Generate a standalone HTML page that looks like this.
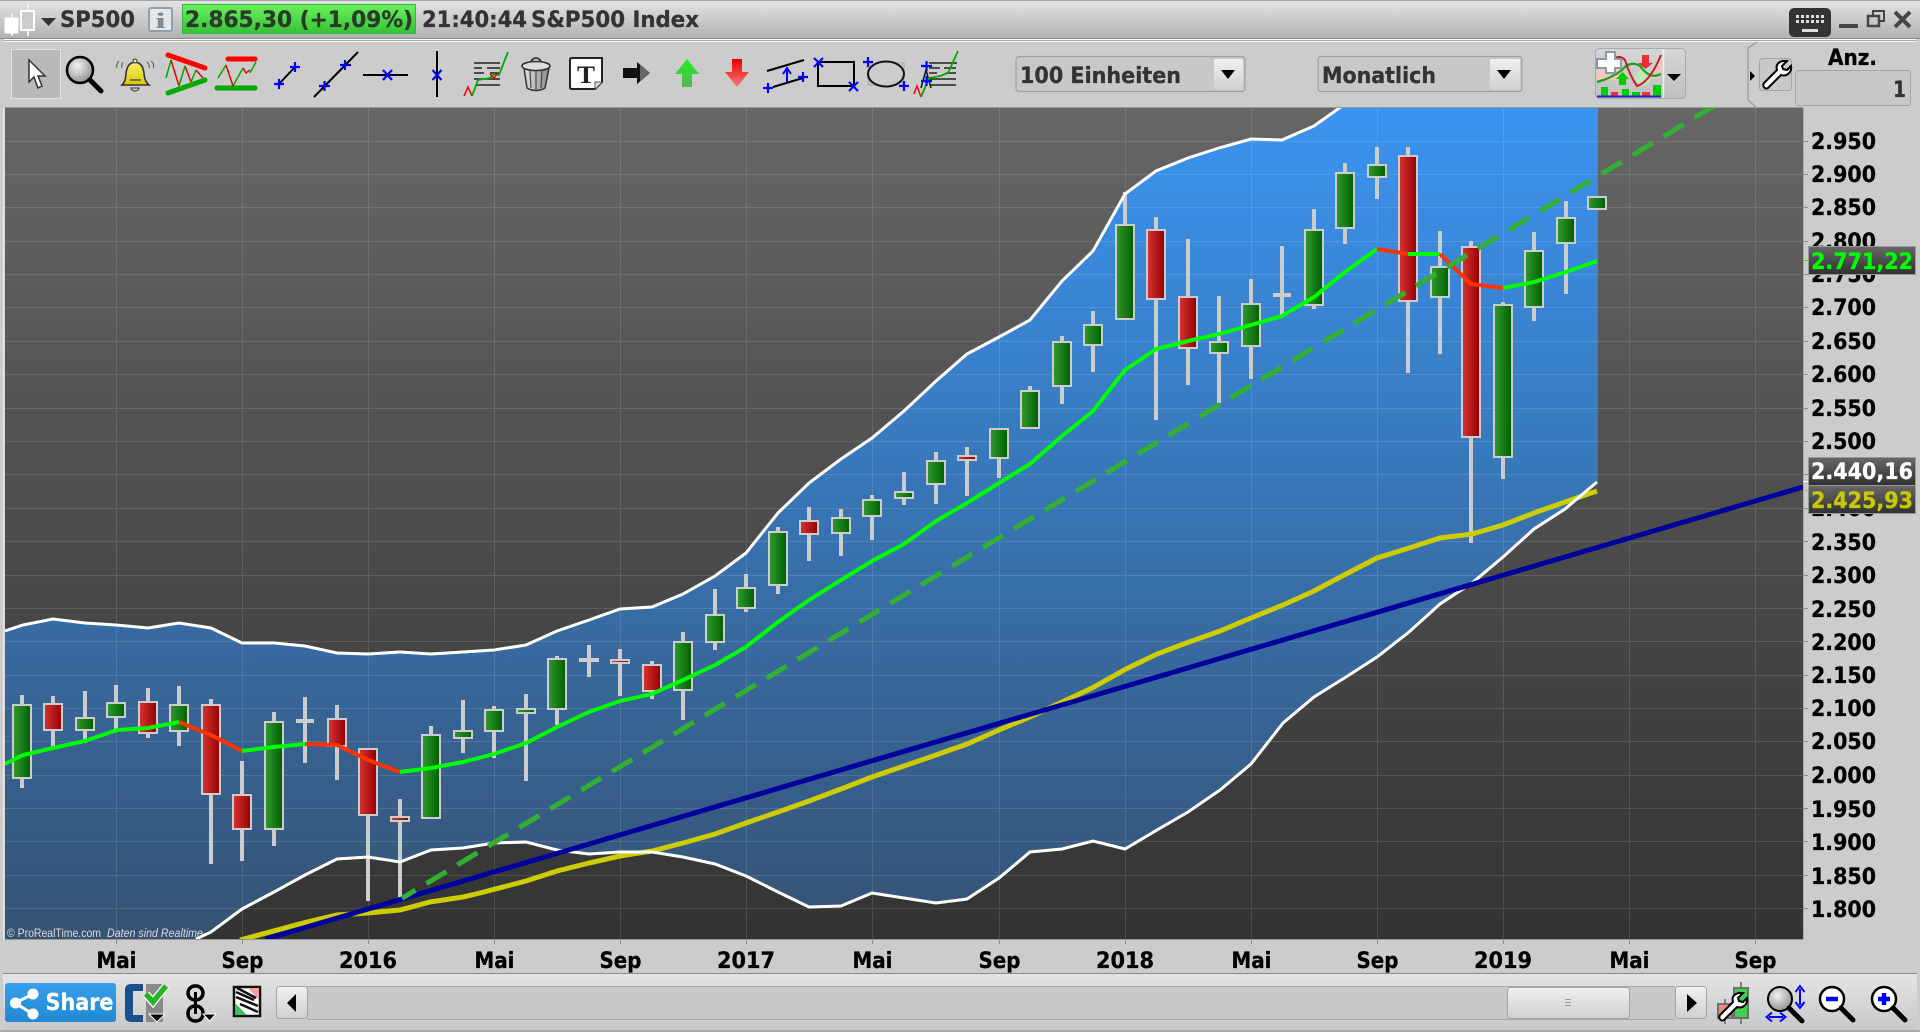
<!DOCTYPE html>
<html><head><meta charset="utf-8"><title>SP500</title>
<style>
html,body{margin:0;padding:0;background:#ccc;overflow:hidden}
svg{display:block}
text{font-family:"DejaVu Sans","Liberation Sans",sans-serif;font-weight:bold;font-size:22px}
.a{fill:#000;stroke:#000;stroke-width:.3px;font-size:22.5px}
.x{fill:#000;stroke:#000;stroke-width:.3px}
.t{fill:#333;stroke:#333;stroke-width:.3px}
.b{fill:none;stroke:#000;stroke-width:2}
.p{fill:none;stroke:#00f;stroke-width:2.2}
.g{stroke:#ccc;stroke-width:2;fill:url(#cg)}
.r{stroke:#ccc;stroke-width:2;fill:url(#cr)}
.ma{fill:none;stroke:#0f0;stroke-width:4}
.mr{fill:none;stroke:#f30;stroke-width:4}
</style></head><body>
<svg width="1920" height="1032" viewBox="0 0 1920 1032" xmlns="http://www.w3.org/2000/svg">
<defs>
<linearGradient id="tb" x1="0" y1="0" x2="0" y2="1"><stop offset="0" stop-color="#e4e4e4"/><stop offset="1" stop-color="#b2b2b2"/></linearGradient>
<linearGradient id="pr" x1="0" y1="0" x2="0" y2="1"><stop offset="0" stop-color="#68f25a"/><stop offset="1" stop-color="#36c236"/></linearGradient>
<linearGradient id="bg" gradientUnits="userSpaceOnUse" x1="0" y1="108" x2="0" y2="939"><stop offset="0" stop-color="#666"/><stop offset="1" stop-color="#333"/></linearGradient>
<linearGradient id="bd" gradientUnits="userSpaceOnUse" x1="0" y1="108" x2="0" y2="939"><stop offset="0" stop-color="#3a94f0"/><stop offset="1" stop-color="#365273"/></linearGradient>
<linearGradient id="cg"><stop offset="0" stop-color="#319a31"/><stop offset="1" stop-color="#005f00"/></linearGradient>
<linearGradient id="cr"><stop offset="0" stop-color="#d83434"/><stop offset="1" stop-color="#940000"/></linearGradient>
<linearGradient id="box" x1="0" y1="0" x2="0" y2="1"><stop offset="0" stop-color="#686868"/><stop offset="1" stop-color="#303030"/></linearGradient>
<linearGradient id="btn" x1="0" y1="0" x2="0" y2="1"><stop offset="0" stop-color="#f0f0f0"/><stop offset="1" stop-color="#d0d0d0"/></linearGradient>
<linearGradient id="btn2" x1="0" y1="0" x2="0" y2="1"><stop offset="0" stop-color="#d6d6d6"/><stop offset="1" stop-color="#c0c0c0"/></linearGradient>
<linearGradient id="bar" x1="0" y1="0" x2="0" y2="1"><stop offset="0" stop-color="#e4e4e4"/><stop offset="1" stop-color="#c8c8c8"/></linearGradient>
<linearGradient id="sh" x1="0" y1="0" x2="0" y2="1"><stop offset="0" stop-color="#36a0ea"/><stop offset="1" stop-color="#2288d2"/></linearGradient>
<linearGradient id="up" x1="0" y1="0" x2="0" y2="1"><stop offset="0" stop-color="#1cf01c"/><stop offset="1" stop-color="#5ab45a"/></linearGradient>
<linearGradient id="dn" x1="0" y1="0" x2="0" y2="1"><stop offset="0" stop-color="#e60000"/><stop offset="1" stop-color="#ff7a7a"/></linearGradient>
<linearGradient id="bell" x1="0" y1="0" x2="0" y2="1"><stop offset="0" stop-color="#f8f070"/><stop offset="1" stop-color="#d8c800"/></linearGradient>
<linearGradient id="can" x1="0" y1="0" x2="1" y2="0"><stop offset="0" stop-color="#e0e0e0"/><stop offset="1" stop-color="#8a8a8a"/></linearGradient>
<radialGradient id="lens" cx=".4" cy=".35" r=".7"><stop offset="0" stop-color="#f4f4f4"/><stop offset="1" stop-color="#8a8a8a"/></radialGradient>
<clipPath id="plot"><rect x="5" y="108" width="1798" height="831"/></clipPath>
</defs>

<rect width="1920" height="1032" fill="#ccc"/>
<!-- title bar -->
<rect x="0" y="0" width="1920" height="38" fill="url(#tb)"/>
<rect x="0" y="0" width="1920" height="1" fill="#a4a4a4"/>
<rect x="0" y="38" width="1920" height="1" fill="#8c8c8c"/>
<rect x="4" y="39" width="1912" height="1" fill="#fff"/>
<rect x="4" y="40" width="1912" height="1" fill="#aaa"/>
<rect x="4" y="41" width="1912" height="1" fill="#f4f4f4"/>
<path d="M12 14V36M28 3V36" stroke="#eee" stroke-width="2"/>
<rect x="5" y="18" width="13" height="15" fill="#fff" stroke="#fff"/>
<rect x="21" y="11" width="13" height="19" fill="#ccc" stroke="#fff" stroke-width="2"/>
<path d="M41 18H56L48.500 26Z" fill="#333"/>
<text x="60" y="27" textLength="75" lengthAdjust="spacingAndGlyphs" class="t">SP500</text>
<rect x="149" y="8" width="23" height="23" rx="2" fill="#e6e6e6" stroke="#8ea0ae" stroke-width="2"/>
<text x="155" y="28" textLength="11" lengthAdjust="spacingAndGlyphs" style="fill:#808a90;font-family:'Liberation Serif',serif;font-size:22px">i</text>
<rect x="182.500" y="4.500" width="233" height="29" fill="url(#pr)" stroke="#3fb13f"/>
<text x="185" y="27" textLength="228" lengthAdjust="spacingAndGlyphs" style="fill:#2c3a2c;stroke:#2c3a2c;stroke-width:.3px">2.865,30 (+1,09%)</text>
<text x="422" y="27" textLength="105" lengthAdjust="spacingAndGlyphs" class="t">21:40:44</text>
<text x="531" y="27" textLength="168" lengthAdjust="spacingAndGlyphs" class="t">S&amp;P500 Index</text>
<!-- window controls -->
<rect x="1789" y="8" width="42" height="29" rx="5" fill="#333"/>
<path d="M1796 15h3v3h-3zM1801 15h3v3h-3zM1806 15h3v3h-3zM1811 15h3v3h-3zM1816 15h3v3h-3zM1821 15h3v3h-3zM1796 20h3v3h-3zM1801 20h3v3h-3zM1806 20h3v3h-3zM1811 20h3v3h-3zM1816 20h3v3h-3zM1821 20h3v3h-3zM1802 29h16v3h-16z" fill="#ddd"/>
<rect x="1839" y="24" width="19" height="4" rx="1" fill="#444"/>
<path d="M1873 16V11H1884V21H1878" fill="none" stroke="#444" stroke-width="2"/>
<rect x="1868" y="16" width="11" height="10" fill="none" stroke="#444" stroke-width="2.500"/>
<path d="M1895 12L1910 27M1910 12L1895 27" stroke="#444" stroke-width="4"/>

<!-- toolbar -->
<rect x="11.500" y="49.500" width="49" height="49" fill="#b9b9b9" stroke="#e2e2e2"/>
<path d="M29 60V82L34 77L38 88L42 86L38 76H45Z" fill="#fff" stroke="#333" stroke-width="1.500"/>
<circle cx="80" cy="70" r="13" fill="url(#lens)" stroke="#000" stroke-width="2.500"/>
<path d="M90 80L101 91" stroke="#000" stroke-width="5" stroke-linecap="round"/>
<path d="M122 85C127 80 125 74 127 69C129 60 141 60 143 69C145 74 143 80 149 85Z" fill="url(#bell)" stroke="#333" stroke-width="1.600"/>
<circle cx="135" cy="61" r="2" fill="#ddd" stroke="#333"/>
<path d="M131 88a4 3 0 0 0 8 0Z" fill="#ccc" stroke="#333"/>
<path d="M130 80H141" stroke="#555" stroke-width="1.500"/>
<path d="M119 61Q116 64 117 68M123 62Q121 65 122 68M151 61Q155 64 153 68M147 62Q150 65 149 68" fill="none" stroke="#555"/>
<path d="M168 55L205 68" stroke="#f00" stroke-width="5" stroke-linecap="round"/>
<path d="M168 93L205 80" stroke="#0a0" stroke-width="5" stroke-linecap="round"/>
<path d="M166 78L171 60" stroke="#0a0" stroke-width="1.500" fill="none"/>
<path d="M171 60L179 86M185 66L191 82M196 70L203 78" stroke="#e00" stroke-width="1.500" fill="none"/>
<path d="M179 86L185 66M191 82L196 70" stroke="#0a0" stroke-width="1.500" fill="none"/>
<path d="M228 59H255" stroke="#f00" stroke-width="5" stroke-linecap="round"/>
<path d="M217 88H255" stroke="#0a0" stroke-width="5" stroke-linecap="round"/>
<path d="M218 78L226 65M233 86L243 68M250 73L256 62" stroke="#0a0" stroke-width="1.500" fill="none"/>
<path d="M226 65L233 86M243 68L246 73L250 70" stroke="#e00" stroke-width="1.500" fill="none"/>
<path d="M279 84L295 67" class="b"/><path d="M274 84H284M279 79V89M290 67H300M295 62V72" class="p"/>
<path d="M314 97L358 52" class="b"/><path d="M319 86H330M324.500 81V91M340 65H351M345 60V70" class="p"/>
<path d="M363 75H408" class="b" stroke-width="2.500"/><path d="M383 70L392 80M392 70L383 80" class="p"/>
<path d="M437 51V97" class="b"/><path d="M432.500 70L441.500 80M441.500 70L432.500 80" class="p"/>
<path d="M474 63H500M474 68H482M487 68H500M474 73H484M490 73H500M474 79H500M476 85H500" stroke="#222" stroke-width="1.500" fill="none"/>
<path d="M464 96L468 87L472 96" fill="none" stroke="#e00" stroke-width="1.500"/>
<path d="M472 96L478 80L490 78L494 74L499 75L508 52" fill="none" stroke="#0a0" stroke-width="1.800"/>
<path d="M490 74L494 78L497 74" fill="none" stroke="#e00" stroke-width="1.500"/>
<path d="M524 68L527 88Q536 93 545 88L549 68" fill="url(#can)" stroke="#333" stroke-width="1.500"/>
<path d="M530 71L531 88M536 71V90M542 71L541 88" stroke="#444" stroke-width="1.200"/>
<ellipse cx="536" cy="66" rx="14" ry="4.500" fill="#ddd" stroke="#333" stroke-width="1.600"/>
<path d="M531 61Q536 55 541 61" fill="none" stroke="#333" stroke-width="1.800"/>
<path d="M572 58H602V82L595 89H572Q570 89 570 87V60Q570 58 572 58Z" fill="#fff" stroke="#222" stroke-width="2"/>
<path d="M595 89V82H602" fill="#ddd" stroke="#555"/>
<text x="577" y="83" textLength="18" lengthAdjust="spacingAndGlyphs" style="fill:#222;font-family:'Liberation Serif',serif;font-size:25px">T</text>
<path d="M623 68H637V62L650 73L637 84V78H623Z" fill="#111"/><path d="M640 65L650 73L640 81Z" fill="#666"/>
<path d="M687 59L699 74H692V87H682V74H675Z" fill="url(#up)"/>
<path d="M732 59H742V72H749L737 87L725 72H732Z" fill="url(#dn)"/>
<path d="M767 71L804 60M773 87L803 78" class="b"/>
<path d="M763 88H773M768 83V93M798 77H808M803 72V82" class="p"/>
<path d="M787 82V70M783 74L787 68L791 74" fill="none" stroke="#00f" stroke-width="2"/>
<rect x="818" y="62" width="36" height="24" class="b" stroke-width="2"/>
<path d="M814 58L823 67M823 58L814 67M849 82L858 91M858 82L849 91" class="p"/>
<rect x="867" y="62" width="38" height="24" fill="#b9b9b9"/>
<ellipse cx="886" cy="74" rx="18" ry="12.500" fill="#ccc" stroke="#111" stroke-width="2"/>
<path d="M863 62H873M868 57V67M899 86H909M904 81V91" class="p"/>
<path d="M929 63H957M929 68H940M944 68H956M929 73H937M946 73H956M929 79H956M931 85H956" stroke="#222" stroke-width="1.500" fill="none"/>
<path d="M921 88L926 70L931 88" fill="none" stroke="#111" stroke-width="1.500"/>
<path d="M914 94L917 86L921 97" fill="none" stroke="#e00" stroke-width="1.500"/>
<path d="M921 97L929 78L940 76L948 73L958 51" fill="none" stroke="#0a0" stroke-width="1.800"/>
<path d="M921 81H932M926.500 76V86M921 66H932M926.500 61V71" class="p"/>
<!-- dropdowns -->
<rect x="1016" y="56.500" width="229" height="35" rx="3" fill="#c8c8c8" stroke="#a0a0a0" stroke-width="1.200"/>
<rect x="1214" y="59" width="29" height="31" rx="2" fill="url(#btn)"/>
<path d="M1221 70H1235L1228 79Z" fill="#000"/>
<text x="1020" y="83" textLength="161" lengthAdjust="spacingAndGlyphs" class="t">100 Einheiten</text>
<rect x="1318" y="56.500" width="204" height="35" rx="3" fill="#c8c8c8" stroke="#a0a0a0" stroke-width="1.200"/>
<rect x="1490" y="59" width="30" height="31" rx="2" fill="url(#btn)"/>
<path d="M1497 70H1511L1504 79Z" fill="#000"/>
<text x="1322" y="83" textLength="114" lengthAdjust="spacingAndGlyphs" class="t">Monatlich</text>
<!-- indicator button -->
<rect x="1595.500" y="48.500" width="90" height="50" rx="4" fill="url(#btn2)" stroke="#aaa"/>
<path d="M1663.500 49V98" stroke="#f2f2f2" stroke-width="1.500"/>
<path d="M1634 78Q1645 60 1650 78Q1652 85 1640 86Z" fill="#bde8bd"/>
<path d="M1597 66L1612 58L1626 80L1597 80Z" fill="#f6c8c0"/>
<path d="M1645 78Q1655 72 1661 55V78Z" fill="#f6c8c0"/>
<path d="M1597 82Q1612 78 1622 70Q1630 60 1640 66Q1650 80 1661 74" fill="none" stroke="#1aa01a" stroke-width="2.200"/>
<path d="M1612 62Q1618 53 1625 60Q1630 76 1637 86Q1650 82 1661 55" fill="none" stroke="#c02020" stroke-width="2"/>
<path d="M1601 87h7v9h-7zM1622 89h7v7h-7zM1632 92h8v4h-8zM1653 85h8v11h-8z" fill="#0c0"/>
<path d="M1611 92h7v4h-7zM1642 92h8v4h-8z" fill="#e33"/>
<path d="M1597 96.500H1661" stroke="#22c" stroke-width="2"/>
<path d="M1606 52H1615V59H1621V68H1615V73H1606V68H1597V59H1606Z" fill="#fff" stroke="#8a9aa8" stroke-width="2"/>
<path d="M1642 55H1649V63H1653L1645.500 69L1638 63H1642Z" fill="#e83030"/>
<path d="M1622.500 72L1629 79H1626V85H1619V79H1616Z" fill="#0c0"/>
<path d="M1667 74H1681L1674 81Z" fill="#000"/>
<!-- tab + wrench -->
<path d="M1757 42L1748 48V100L1757 108" fill="none" stroke="#999" stroke-width="1.200"/>
<path d="M1750 71L1755 76L1750 81Z" fill="#000"/>
<rect x="1759.500" y="58.500" width="32" height="32" rx="3" fill="#c8c8c8" stroke="#a4a4a4"/>
<path id="w" d="M1764 83L1777 70C1775 64 1780 60 1787 61L1782 66L1783 69L1787 70L1791 66C1792 72 1787 77 1781 75L1768 88C1765 90 1762 86 1764 83Z" fill="#fff" stroke="#000" stroke-width="2"/>
<text x="1828" y="65" textLength="49" lengthAdjust="spacingAndGlyphs" class="x">Anz.</text>
<rect x="1795.500" y="70.500" width="115" height="35" rx="3" fill="#c8c8c8" stroke="#a4a4a4"/>
<text x="1893" y="97" textLength="13" lengthAdjust="spacingAndGlyphs" class="t">1</text>

<!-- chart -->
<rect x="3" y="108" width="1.500" height="831" fill="#e6e6e6"/>
<rect x="5" y="107" width="1798" height="1" fill="#999"/>
<rect x="5" y="108" width="1798" height="831" fill="url(#bg)"/>
<g clip-path="url(#plot)">
<polygon fill="url(#bd)" points="5,631 23,625 53,619 85,623 116,625 148,628 179,623 211,628 242,643 274,643 305,646 337,653 368,654 400,652 431,654 463,652 494,650 526,645 557,631 589,620 620,609 652,607 683,594 715,576 746,553 778,513 809,483 841,459 872,438 904,411 936,381 967,354 999,337 1030,320 1062,281 1093,251 1125,194 1156,171 1188,158 1219,148 1251,139 1282,140 1314,126 1345,104 1400,60 1598,60 1598,482 1597,482 1565,509 1534,529 1503,557 1472,583 1440,604 1409,632 1377,657 1346,677 1314,697 1283,723 1251,764 1220,790 1188,812 1157,830 1125,849 1093,841 1062,849 1030,852 999,878 967,899 936,903 904,898 872,893 841,906 809,907 778,892 746,876 715,864 683,857 652,852 620,852 589,854 557,850 526,842 494,843 463,848 431,850 400,862 368,857 337,859 305,875 274,892 242,909 211,932 196,939 180,950 5,950"/>
<path stroke="#fff" stroke-opacity=".12" stroke-width="1" fill="none" d="M5 141.500H1803M5 174.500H1803M5 207.500H1803M5 241.500H1803M5 274.500H1803M5 307.500H1803M5 341.500H1803M5 374.500H1803M5 408.500H1803M5 441.500H1803M5 474.500H1803M5 508.500H1803M5 541.500H1803M5 575.500H1803M5 608.500H1803M5 641.500H1803M5 675.500H1803M5 708.500H1803M5 741.500H1803M5 775.500H1803M5 808.500H1803M5 841.500H1803M5 875.500H1803M5 908.500H1803M116.500 108V939M242.500 108V939M368.500 108V939M494.500 108V939M620.500 108V939M746.500 108V939M872.500 108V939M999.500 108V939M1125.500 108V939M1251.500 108V939M1377.500 108V939M1503.500 108V939M1629.500 108V939M1755.500 108V939"/>
<!-- wicks -->
<path fill="none" stroke="#ccc" stroke-width="4" d="M22 695V788M53 696V747M85 691V743M116 685V730M148 688V738M179 686V746M211 699V864M242 761V861M274 712V846M305 697V763M337 705V780M368 748V901M400 799V900M431 726V819M463 700V753M494 706V758M526 694V781M557 656V725M589 645V677M620 649V696M652 661V699M683 632V720M715 589V650M746 574V612M778 527V594M809 507V561M841 509V556M872 495V540M904 472V505M936 452V504M967 447V496M999 428V478M1030 386V429M1062 336V404M1093 311V372M1125 192V320M1156 217V420M1188 239V385M1219 296V403M1251 279V379M1282 246V315M1314 209V309M1345 163V244M1377 147V199M1408 147V373M1440 231V354M1471 241V543M1503 302V479M1534 232V321M1566 201V294"/>
<path fill="#ccc" d="M296 719h18v4h-18zM579 658h20v4h-20zM1273 293h18v4h-18z"/>
<!-- bodies -->
<rect class="g" x="13" y="705" width="18" height="73"/>
<rect class="r" x="44" y="704" width="18" height="26"/>
<rect class="g" x="76" y="718" width="18" height="12"/>
<rect class="g" x="107" y="703" width="18" height="14"/>
<rect class="r" x="139" y="702" width="18" height="31"/>
<rect class="g" x="170" y="705" width="18" height="26"/>
<rect class="r" x="202" y="705" width="18" height="89"/>
<rect class="r" x="233" y="795" width="18" height="34"/>
<rect class="g" x="265" y="722" width="18" height="107"/>
<rect class="r" x="328" y="719" width="18" height="27"/>
<rect class="r" x="359" y="749" width="18" height="66"/>
<rect class="r" x="391" y="817" width="18" height="4"/>
<rect class="g" x="422" y="735" width="18" height="83"/>
<rect class="g" x="454" y="731" width="18" height="7"/>
<rect class="g" x="485" y="710" width="18" height="21"/>
<rect class="g" x="517" y="709" width="18" height="4"/>
<rect class="g" x="548" y="659" width="18" height="50"/>
<rect class="r" x="611" y="660" width="18" height="3"/>
<rect class="r" x="643" y="665" width="18" height="26"/>
<rect class="g" x="674" y="642" width="18" height="48"/>
<rect class="g" x="706" y="615" width="18" height="27"/>
<rect class="g" x="737" y="588" width="18" height="20"/>
<rect class="g" x="769" y="532" width="18" height="53"/>
<rect class="r" x="800" y="521" width="18" height="13"/>
<rect class="g" x="832" y="518" width="18" height="15"/>
<rect class="g" x="863" y="500" width="18" height="16"/>
<rect class="g" x="895" y="492" width="18" height="6"/>
<rect class="g" x="927" y="461" width="18" height="23"/>
<rect class="r" x="958" y="456" width="18" height="4"/>
<rect class="g" x="990" y="429" width="18" height="29"/>
<rect class="g" x="1021" y="391" width="18" height="37"/>
<rect class="g" x="1053" y="342" width="18" height="44"/>
<rect class="g" x="1084" y="325" width="18" height="20"/>
<rect class="g" x="1116" y="225" width="18" height="94"/>
<rect class="r" x="1147" y="230" width="18" height="69"/>
<rect class="r" x="1179" y="297" width="18" height="51"/>
<rect class="g" x="1210" y="342" width="18" height="11"/>
<rect class="g" x="1242" y="304" width="18" height="42"/>
<rect class="g" x="1305" y="230" width="18" height="75"/>
<rect class="g" x="1336" y="173" width="18" height="55"/>
<rect class="g" x="1368" y="165" width="18" height="12"/>
<rect class="r" x="1399" y="156" width="18" height="145"/>
<rect class="g" x="1431" y="267" width="18" height="30"/>
<rect class="r" x="1462" y="247" width="18" height="190"/>
<rect class="g" x="1494" y="305" width="18" height="152"/>
<rect class="g" x="1525" y="251" width="18" height="56"/>
<rect class="g" x="1557" y="218" width="18" height="25"/>
<rect class="g" x="1588" y="197" width="18" height="12"/>
<!-- MA -->
<polyline class="ma" points="5,764 23,755 53,748 85,741 117,730 148,728 179,722"/>
<polyline class="mr" points="179,722 211,735 242,751"/>
<polyline class="ma" points="242,751 274,747 305,744"/>
<polyline class="mr" points="305,744 337,745 368,760 400,772"/>
<polyline class="ma" points="400,772 431,768 463,762 494,754 526,743 557,727 589,712 620,701 652,694 683,680 715,665 746,647 778,622 809,600 841,580 872,561 904,544 936,521 967,503 999,483 1030,464 1062,436 1093,411 1125,370 1156,349 1188,341 1219,334 1251,325 1282,316 1314,297 1345,272 1377,249"/>
<polyline class="mr" points="1377,249 1408,254"/>
<polyline class="ma" points="1408,254 1440,254"/>
<polyline class="mr" points="1440,254 1471,284 1503,288"/>
<polyline class="ma" points="1503,288 1534,282 1566,272 1597,261"/>
<polyline fill="none" stroke="#cc0" stroke-width="5" points="240,940 307,922 337,915 368,913 400,910 430,902 463,897 480,893 526,881 557,871 589,863 620,856 652,851 683,843 715,834 746,823 778,812 809,801 841,789 872,777 904,766 936,755 967,744 999,730 1030,717 1092,688 1126,669 1157,654 1189,642 1220,631 1251,618 1283,605 1314,591 1346,574 1377,558 1409,548 1440,538 1472,534 1503,525 1534,513 1565,502 1597,491"/>
<polyline fill="none" stroke="#fff" stroke-width="3" points="5,631 23,625 53,619 85,623 116,625 148,628 179,623 211,628 242,643 274,643 305,646 337,653 368,654 400,652 431,654 463,652 494,650 526,645 557,631 589,620 620,609 652,607 683,594 715,576 746,553 778,513 809,483 841,459 872,438 904,411 936,381 967,354 999,337 1030,320 1062,281 1093,251 1125,194 1156,171 1188,158 1219,148 1251,139 1282,140 1314,126 1345,104"/>
<polyline fill="none" stroke="#fff" stroke-width="3" points="196,939 211,932 242,909 274,892 305,875 337,859 368,857 400,862 431,850 463,848 494,843 526,842 557,850 589,854 620,852 652,852 683,857 715,864 746,876 778,892 809,907 841,906 872,893 904,898 936,903 967,899 999,878 1030,852 1062,849 1093,841 1125,849 1157,830 1188,812 1220,790 1251,764 1283,723 1314,697 1346,677 1377,657 1409,632 1440,604 1472,583 1503,557 1534,529 1565,509 1597,482"/>
<path d="M266 939L1803 487" stroke="#00009c" stroke-width="5" fill="none"/>
<path d="M1714.500 105.700L402 898.300" stroke="#33b033" stroke-width="5" fill="none" stroke-dasharray="23.400 12.730"/>
<text x="7" y="937" textLength="94" lengthAdjust="spacingAndGlyphs" style="font:12px 'Liberation Sans',sans-serif;fill:#ddd">© ProRealTime.com</text>
<text x="107" y="937" textLength="96" lengthAdjust="spacingAndGlyphs" style="font:italic 12px 'Liberation Sans',sans-serif;fill:#ddd">Daten sind Realtime</text>
</g>
<rect x="5" y="939" width="1798" height="1" fill="#999"/>
<rect x="1803" y="108" width="1" height="832" fill="#aaa"/>
<!-- ticks -->
<path stroke="#8a8a8a" fill="none" d="M116.500 939V944M242.500 939V944M368.500 939V944M494.500 939V944M620.500 939V944M746.500 939V944M872.500 939V944M999.500 939V944M1125.500 939V944M1251.500 939V944M1377.500 939V944M1503.500 939V944M1629.500 939V944M1755.500 939V944"/>
<path stroke="#8a8a8a" fill="none" d="M1803 141.500H1808M1803 174.500H1808M1803 207.500H1808M1803 241.500H1808M1803 274.500H1808M1803 307.500H1808M1803 341.500H1808M1803 374.500H1808M1803 408.500H1808M1803 441.500H1808M1803 474.500H1808M1803 508.500H1808M1803 541.500H1808M1803 575.500H1808M1803 608.500H1808M1803 641.500H1808M1803 675.500H1808M1803 708.500H1808M1803 741.500H1808M1803 775.500H1808M1803 808.500H1808M1803 841.500H1808M1803 875.500H1808M1803 908.500H1808"/>
<!-- y labels -->
<text class="a" x="1811" y="149" textLength="65" lengthAdjust="spacingAndGlyphs">2.950</text>
<text class="a" x="1811" y="182" textLength="65" lengthAdjust="spacingAndGlyphs">2.900</text>
<text class="a" x="1811" y="215" textLength="65" lengthAdjust="spacingAndGlyphs">2.850</text>
<text class="a" x="1811" y="249" textLength="65" lengthAdjust="spacingAndGlyphs">2.800</text>
<text class="a" x="1811" y="282" textLength="65" lengthAdjust="spacingAndGlyphs">2.750</text>
<text class="a" x="1811" y="315" textLength="65" lengthAdjust="spacingAndGlyphs">2.700</text>
<text class="a" x="1811" y="349" textLength="65" lengthAdjust="spacingAndGlyphs">2.650</text>
<text class="a" x="1811" y="382" textLength="65" lengthAdjust="spacingAndGlyphs">2.600</text>
<text class="a" x="1811" y="416" textLength="65" lengthAdjust="spacingAndGlyphs">2.550</text>
<text class="a" x="1811" y="449" textLength="65" lengthAdjust="spacingAndGlyphs">2.500</text>
<text class="a" x="1811" y="482" textLength="65" lengthAdjust="spacingAndGlyphs">2.450</text>
<text class="a" x="1811" y="516" textLength="65" lengthAdjust="spacingAndGlyphs">2.400</text>
<text class="a" x="1811" y="550" textLength="65" lengthAdjust="spacingAndGlyphs">2.350</text>
<text class="a" x="1811" y="583" textLength="65" lengthAdjust="spacingAndGlyphs">2.300</text>
<text class="a" x="1811" y="617" textLength="65" lengthAdjust="spacingAndGlyphs">2.250</text>
<text class="a" x="1811" y="650" textLength="65" lengthAdjust="spacingAndGlyphs">2.200</text>
<text class="a" x="1811" y="683" textLength="65" lengthAdjust="spacingAndGlyphs">2.150</text>
<text class="a" x="1811" y="716" textLength="65" lengthAdjust="spacingAndGlyphs">2.100</text>
<text class="a" x="1811" y="749" textLength="65" lengthAdjust="spacingAndGlyphs">2.050</text>
<text class="a" x="1811" y="783" textLength="65" lengthAdjust="spacingAndGlyphs">2.000</text>
<text class="a" x="1811" y="817" textLength="65" lengthAdjust="spacingAndGlyphs">1.950</text>
<text class="a" x="1811" y="850" textLength="65" lengthAdjust="spacingAndGlyphs">1.900</text>
<text class="a" x="1811" y="884" textLength="65" lengthAdjust="spacingAndGlyphs">1.850</text>
<text class="a" x="1811" y="917" textLength="65" lengthAdjust="spacingAndGlyphs">1.800</text>
<!-- value boxes -->
<path d="M1803 260.500H1808" stroke="#0f0"/><path d="M1803 481.500H1808" stroke="#fff"/><path d="M1803 490.500H1808" stroke="#cc0"/>
<rect x="1808.500" y="246.500" width="107" height="28" fill="url(#box)" stroke="#999"/>
<text x="1811" y="269" textLength="102" lengthAdjust="spacingAndGlyphs" style="fill:#0f0;stroke:#0f0;stroke-width:.3px">2.771,22</text>
<rect x="1808.500" y="457.500" width="107" height="28" fill="url(#box)" stroke="#999"/>
<text x="1811" y="479" textLength="102" lengthAdjust="spacingAndGlyphs" style="fill:#fff;stroke:#fff;stroke-width:.3px">2.440,16</text>
<rect x="1808.500" y="485.500" width="107" height="28" fill="url(#box)" stroke="#999"/>
<text x="1811" y="508" textLength="102" lengthAdjust="spacingAndGlyphs" style="fill:#c8c800;stroke:#c8c800;stroke-width:.3px">2.425,93</text>
<!-- x labels -->
<text x="96.500" y="968" textLength="40" lengthAdjust="spacingAndGlyphs" class="x">Mai</text>
<text x="221.500" y="968" textLength="42" lengthAdjust="spacingAndGlyphs" class="x">Sep</text>
<text x="339" y="968" textLength="58" lengthAdjust="spacingAndGlyphs" class="x">2016</text>
<text x="474.500" y="968" textLength="40" lengthAdjust="spacingAndGlyphs" class="x">Mai</text>
<text x="599.500" y="968" textLength="42" lengthAdjust="spacingAndGlyphs" class="x">Sep</text>
<text x="717" y="968" textLength="58" lengthAdjust="spacingAndGlyphs" class="x">2017</text>
<text x="852.500" y="968" textLength="40" lengthAdjust="spacingAndGlyphs" class="x">Mai</text>
<text x="978.500" y="968" textLength="42" lengthAdjust="spacingAndGlyphs" class="x">Sep</text>
<text x="1096" y="968" textLength="58" lengthAdjust="spacingAndGlyphs" class="x">2018</text>
<text x="1231.500" y="968" textLength="40" lengthAdjust="spacingAndGlyphs" class="x">Mai</text>
<text x="1356.500" y="968" textLength="42" lengthAdjust="spacingAndGlyphs" class="x">Sep</text>
<text x="1474" y="968" textLength="58" lengthAdjust="spacingAndGlyphs" class="x">2019</text>
<text x="1609.500" y="968" textLength="40" lengthAdjust="spacingAndGlyphs" class="x">Mai</text>
<text x="1734.500" y="968" textLength="42" lengthAdjust="spacingAndGlyphs" class="x">Sep</text>

<!-- bottom bar -->
<rect x="3" y="974" width="1914" height="56" fill="url(#bar)"/>
<rect x="3" y="973" width="1914" height="1" fill="#8c8c8c"/>
<rect x="0" y="1030" width="1920" height="2" fill="#aaa"/>
<rect x="5" y="983" width="111" height="39" rx="3" fill="url(#sh)"/>
<path d="M33 994L15 1003L33 1014" fill="none" stroke="#fff" stroke-width="3"/>
<circle cx="33" cy="994" r="5.500" fill="#fff"/><circle cx="15.500" cy="1003" r="5.500" fill="#fff"/><circle cx="33" cy="1014" r="5.500" fill="#fff"/>
<text x="45.500" y="1010" textLength="68" lengthAdjust="spacingAndGlyphs" style="fill:#fff;stroke:#fff;stroke-width:.3px;font-size:23px">Share</text>
<path d="M143 984H131Q125 984 125 990V1016Q125 1022 131 1022H143V1015H133V991H143Z" fill="#1a4f8c"/>
<rect x="146" y="984" width="17" height="38" fill="#8a8a8a"/>
<path d="M146 994L153 1002L166 986" fill="none" stroke="#fff" stroke-width="8"/>
<path d="M146 994L153 1002L166 986" fill="none" stroke="#22b822" stroke-width="5.500"/>
<path d="M149 1014H165L157 1022Z" fill="#000" stroke="#fff"/>
<rect x="188" y="986" width="15" height="14" rx="7" fill="none" stroke="#000" stroke-width="3.500"/>
<rect x="188" y="1006" width="15" height="15" rx="7" fill="none" stroke="#000" stroke-width="3.500"/>
<path d="M195.500 992V1014" stroke="#000" stroke-width="3"/>
<path d="M203 1014H216L209.500 1021Z" fill="#000" stroke="#fff"/>
<rect x="234" y="987" width="26" height="29" fill="#fff" stroke="#111" stroke-width="2.500"/>
<path d="M248 988H259V1000Z" fill="#f4a0a0"/>
<path d="M235 1015V1003L247 1015Z" fill="#3cc060"/>
<path d="M236 992L254 1000M236 997L258 1006M240 1004L258 1012M237 988L256 998" stroke="#111" stroke-width="2.500"/>
<!-- scroll -->
<rect x="307" y="987" width="1368" height="32" fill="#c8c8c8"/>
<path d="M307 986.500H1675" stroke="#a8a8a8"/>
<path d="M307 1019.500H1675" stroke="#a8a8a8"/>
<rect x="276.500" y="986.500" width="31" height="32" rx="3" fill="url(#btn)" stroke="#a4a4a4"/>
<path d="M296 994V1012L287 1003Z" fill="#000"/>
<rect x="1507.500" y="987.500" width="122" height="31" rx="3" fill="url(#btn)" stroke="#a4a4a4"/>
<path d="M1565 999.500H1571M1565 1002.500H1571M1565 1005.500H1571" stroke="#999"/>
<rect x="1675.500" y="986.500" width="31" height="32" rx="3" fill="url(#btn)" stroke="#a4a4a4"/>
<path d="M1687 994V1012L1697 1003Z" fill="#000"/>
<!-- bottom right icons -->
<path d="M1725 999V1024M1741 982V1024" stroke="#808080" stroke-width="2"/>
<rect x="1718" y="1004" width="14" height="14" fill="#f08a80" stroke="#707070" stroke-width="2"/>
<rect x="1734" y="988" width="14" height="30" fill="#3fd04f" stroke="#707070" stroke-width="2"/>
<use href="#w" transform="translate(-44 932)"/>
<circle cx="1780" cy="999" r="12" fill="url(#lens)" stroke="#000" stroke-width="2"/>
<path d="M1789 1008L1802 1021" stroke="#000" stroke-width="5" stroke-linecap="round"/>
<path d="M1800 989V1005M1795.500 992L1800 986L1804.500 992M1795.500 1002L1800 1008L1804.500 1002" fill="none" stroke="#00f" stroke-width="2"/>
<path d="M1769 1017H1783M1772 1012.500L1766.500 1017L1772 1021.500M1780 1012.500L1785.500 1017L1780 1021.500" fill="none" stroke="#00f" stroke-width="2"/>
<circle cx="1832" cy="999" r="12" fill="#fff" stroke="#000" stroke-width="2.500"/>
<path d="M1841 1008L1853 1020" stroke="#000" stroke-width="5" stroke-linecap="round"/>
<path d="M1826 999H1838" stroke="#00f" stroke-width="4.500"/>
<circle cx="1884" cy="999" r="12" fill="#fff" stroke="#000" stroke-width="2.500"/>
<path d="M1893 1008L1905 1020" stroke="#000" stroke-width="5" stroke-linecap="round"/>
<path d="M1878 999H1890M1884 993V1005" stroke="#00f" stroke-width="4.500"/>
</svg>
</body></html>
